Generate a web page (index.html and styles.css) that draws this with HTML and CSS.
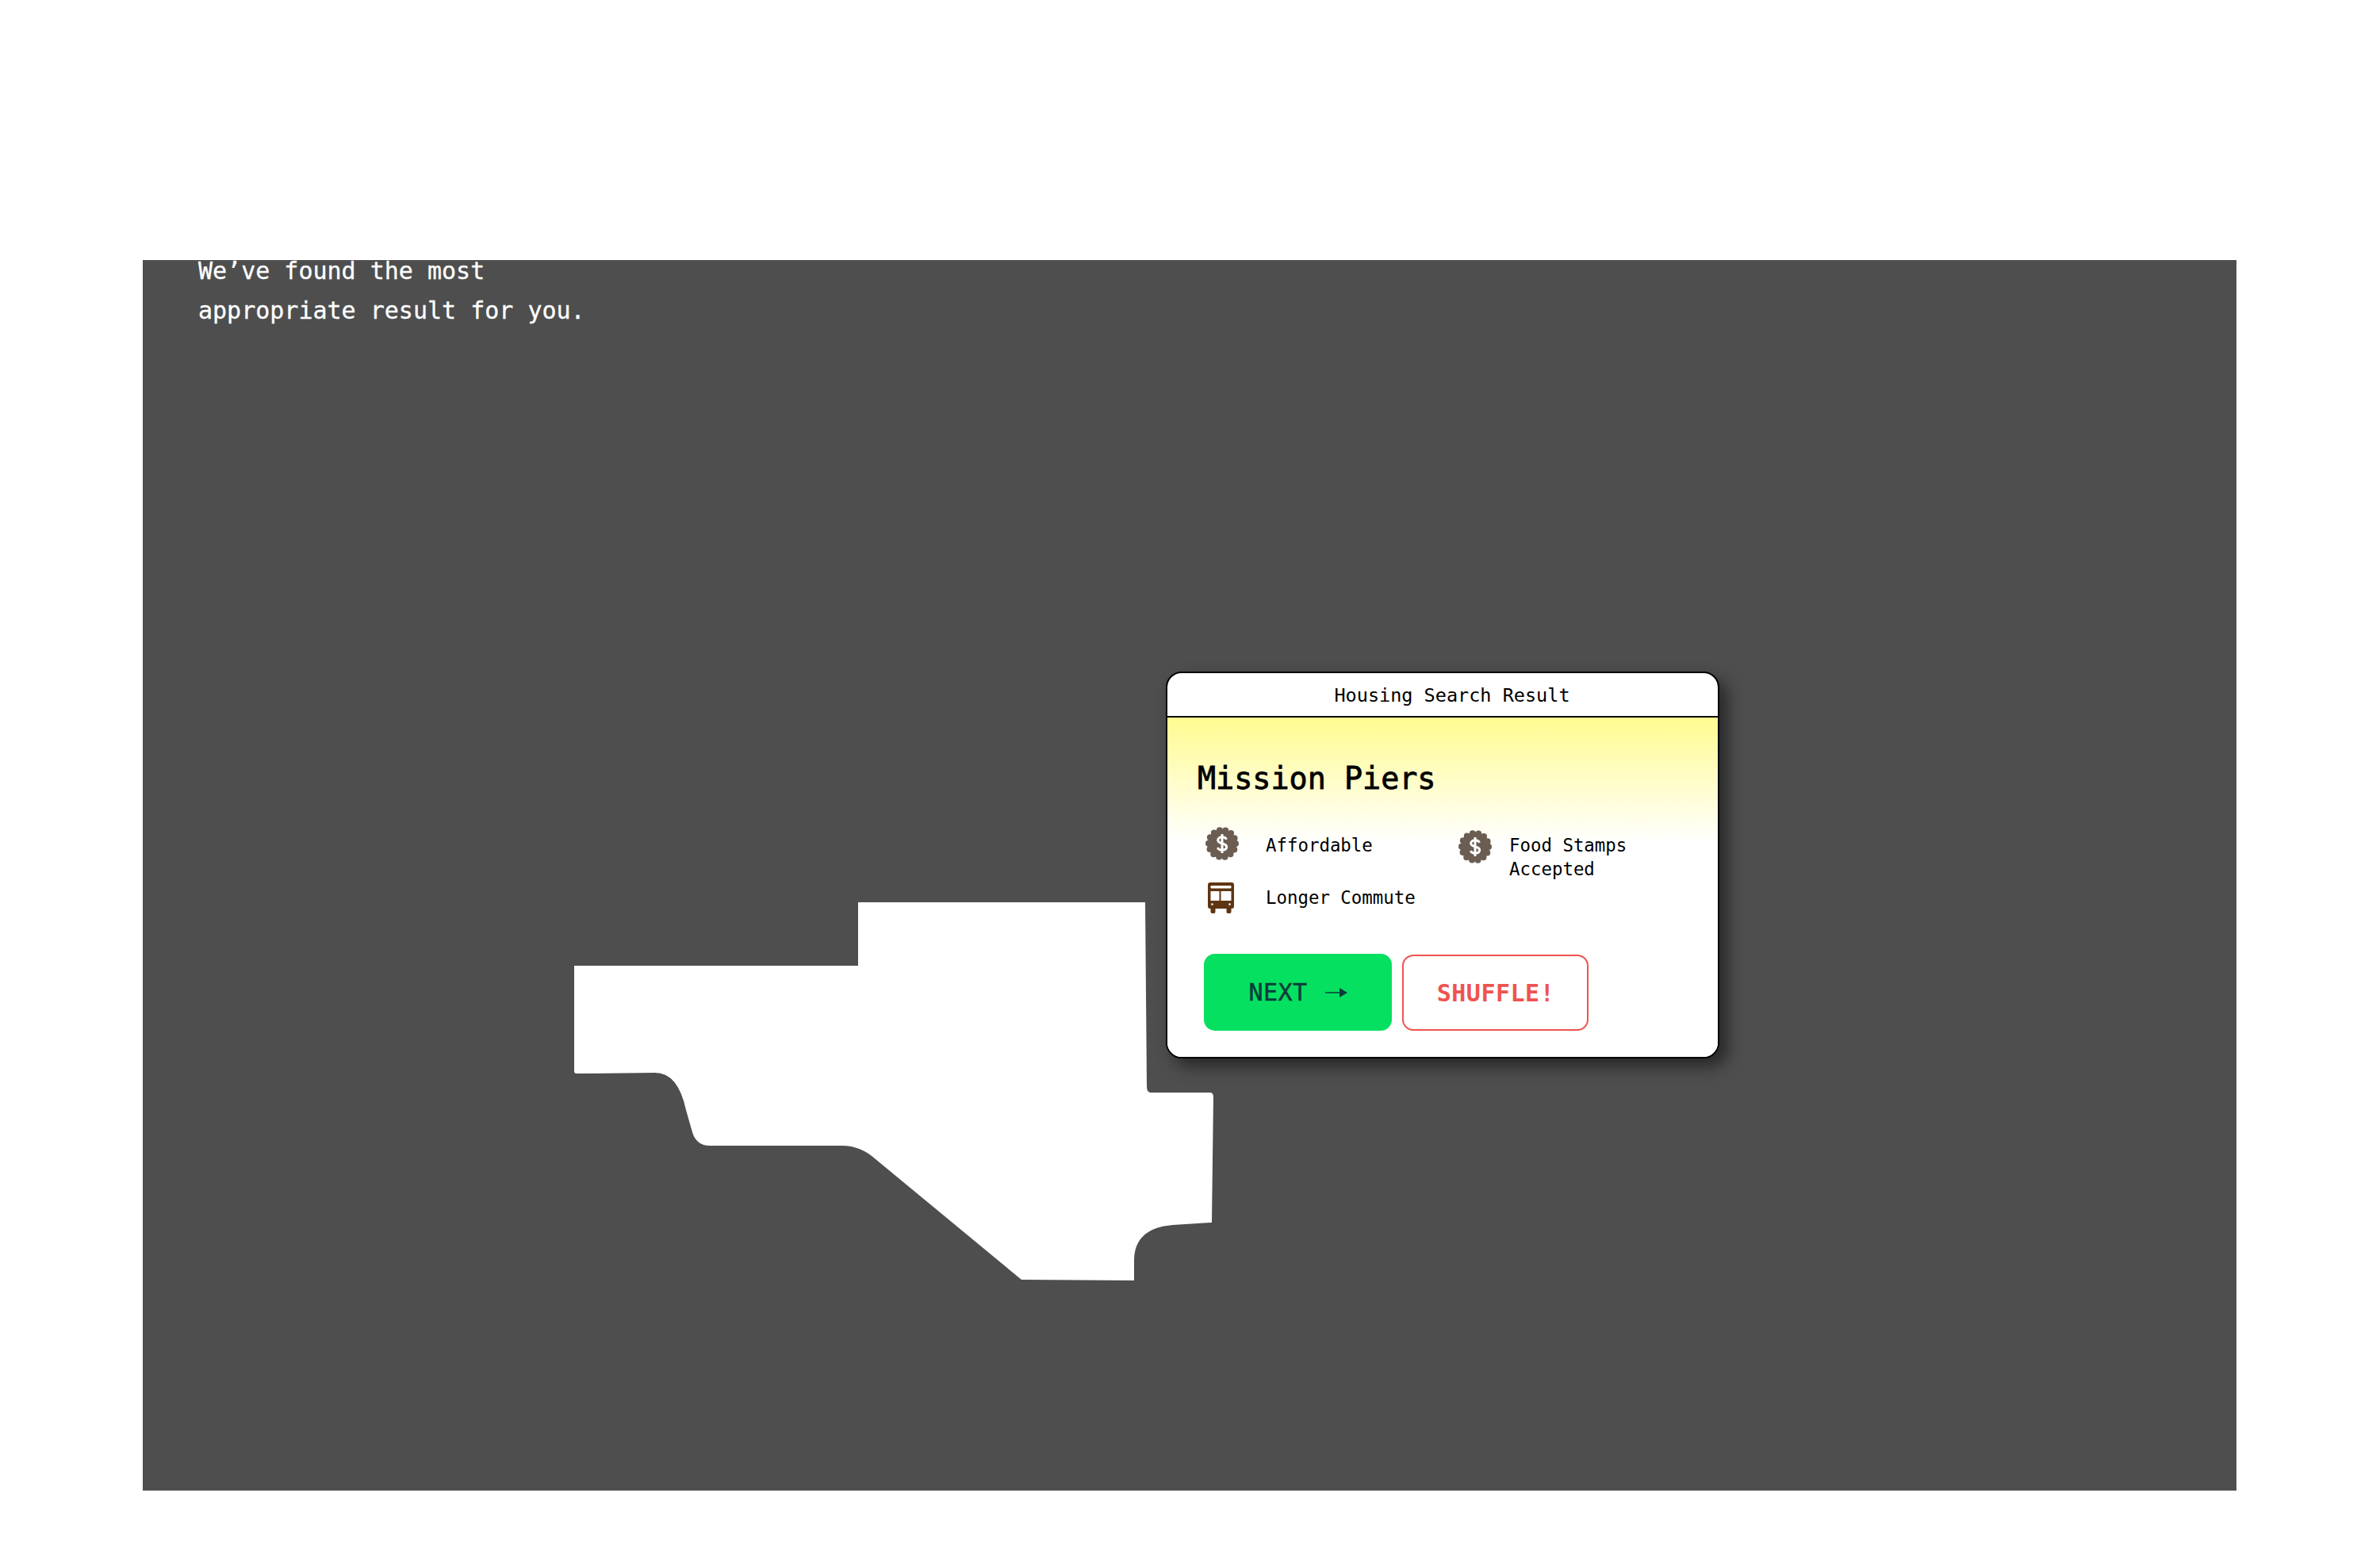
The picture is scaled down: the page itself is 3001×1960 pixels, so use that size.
FILE: index.html
```html
<!DOCTYPE html>
<html lang="en">
<head>
    <meta charset="UTF-8">
    <meta name="viewport" content="width=device-width, initial-scale=1.0">
    <title>Housing Search Result</title>
    <link rel="stylesheet" href="styles.css">
</head>
<body>
    <svg class="defs" width="0" height="0" aria-hidden="true">
        <symbol id="badge" viewBox="0 0 42 42">
            <circle cx="21" cy="21" r="17" fill="#6b5d52"/>
            <circle cx="21" cy="21" r="17" fill="none" stroke="#6b5d52" stroke-width="8" stroke-linecap="round" stroke-dasharray="0 7.63"/>
            <path d="M26.500 15.800c-.8-2-3-3-5.500-3-3 0-5.300 1.600-5.300 4 0 5.500 11 2.800 11 8.300 0 2.500-2.300 4.100-5.700 4.100-2.600 0-4.700-1.100-5.700-3.100M21 9v24" fill="none" stroke="#fff" stroke-width="3"/>
        </symbol>
    </svg>

    <main class="panel">
        <p class="intro">We’ve found the most<br>appropriate result for you.</p>

        <svg class="map-shape" viewBox="724 1138 806 477" aria-hidden="true">
            <path d="M1082 1138H1444L1446 1370Q1446 1378 1451 1378H1526Q1530 1378 1530 1384L1528 1542 1479 1545Q1430 1549 1430 1590V1615L1288 1614 1104 1462Q1085 1445 1062 1445H895Q878 1445 873 1428L865 1400Q855 1353 826 1353L727 1354Q724 1354 724 1351V1218H1082Z" fill="#fff"/>
        </svg>

        <section class="card">
            <header class="card-title">Housing Search Result</header>
            <div class="card-body">
                <h1 class="place-name">Mission Piers</h1>
                <div class="features">
                    <div class="feature">
                        <svg class="icon icon-badge"><use href="#badge"/></svg>
                        <span>Affordable</span>
                    </div>
                    <div class="feature feature-wide">
                        <svg class="icon icon-badge"><use href="#badge"/></svg>
                        <span>Food Stamps<br>Accepted</span>
                    </div>
                    <div class="feature">
                        <svg class="icon icon-bus" viewBox="0 0 33 39">
                            <rect x="3.500" y="30" width="6" height="9" rx="2" fill="#5e3512"/>
                            <rect x="23.500" y="30" width="6" height="9" rx="2" fill="#5e3512"/>
                            <rect width="33" height="33" rx="3" fill="#5e3512"/>
                            <rect x="3.500" y="4" width="26" height="3.500" rx="1" fill="#fff"/>
                            <rect x="3.500" y="11" width="11" height="12" fill="#fff"/>
                            <rect x="16.500" y="11" width="13" height="12" fill="#fff"/>
                            <circle cx="5.500" cy="27.500" r="1.300" fill="#fff"/>
                            <circle cx="27.500" cy="27.500" r="1.300" fill="#fff"/>
                        </svg>
                        <span>Longer Commute</span>
                    </div>
                </div>
                <div class="actions">
                    <button class="btn btn-next">NEXT
                        <svg class="arrow" viewBox="0 0 28 12"><path d="M0 5.200H18V0L28 6 18 12V6.800H0Z" fill="#0a3d3a"/></svg>
                    </button>
                    <button class="btn btn-shuffle">SHUFFLE!</button>
                </div>
            </div>
        </section>
    </main>
</body>
</html>
```

FILE: styles.css
```css
* {
    margin: 0;
    padding: 0;
    box-sizing: border-box;
    font-family: "DejaVu Sans Mono", "Liberation Mono", monospace;
}

body {
    background-color: #fff;
    padding: 328px 0 0 180px;
}

.defs {
    position: absolute;
}

.panel {
    position: relative;
    width: 2640px;
    height: 1552px;
    background-color: #4e4e4e;
    overflow: hidden;
}

.intro {
    margin-top: -11px;
    padding-left: 70px;
    color: #fff;
    font-size: 30px;
    line-height: 50px;
    -webkit-text-stroke: 0.3px #fff;
}

.map-shape {
    position: absolute;
    left: 544px;
    top: 810px;
    width: 806px;
    height: 477px;
}

.card {
    position: absolute;
    left: 1290px;
    top: 519px;
    width: 698px;
    height: 488px;
    background-color: #fff;
    border: 2px solid #000;
    border-radius: 20px;
    box-shadow: 10px 10px 20px rgba(0, 0, 0, 0.5);
    overflow: hidden;
}

.card-title {
    height: 56px;
    padding-left: 24px;
    border-bottom: 2px solid #000;
    color: #000;
    font-size: 23.500px;
    line-height: 56px;
    text-align: center;
}

.card-body {
    height: 430px;
    padding: 52px 0 0 38px;
    background: linear-gradient(#fffb90, #fff 158px);
}

.place-name {
    color: #000;
    font-size: 38.400px;
    font-weight: 400;
    line-height: 50px;
    -webkit-text-stroke: 0.8px #000;
}

.features {
    display: grid;
    grid-template-columns: 319px 1fr;
    row-gap: 6px;
    margin: 44px 0 0 10px;
    color: #000;
    font-size: 22.400px;
    line-height: 30px;
}

.feature {
    display: flex;
    align-items: flex-start;
}

.icon {
    flex: none;
}

.icon-badge {
    width: 42px;
    height: 42px;
    margin: -8px 34px 0 0;
}

.feature-wide .icon-badge {
    margin: -4px 22px 0 0;
}

.icon-bus {
    width: 33px;
    height: 39px;
    margin: -4px 40px 0 3px;
}

.actions {
    display: flex;
    align-items: flex-end;
    gap: 13px;
    margin: 51px 0 0 8px;
}

.btn {
    border-radius: 14px;
    font-size: 30px;
    letter-spacing: 0.5px;
}

.btn-next {
    display: flex;
    align-items: center;
    justify-content: center;
    gap: 22px;
    width: 237px;
    height: 97px;
    border: none;
    background-color: #06e061;
    color: #0a3d3a;
    -webkit-text-stroke: 0.5px #0a3d3a;
}

.arrow {
    width: 28px;
    height: 12px;
}

.btn-shuffle {
    width: 235px;
    height: 96px;
    padding-left: 1px;
    border: 2px solid #ef5350;
    background-color: #fff;
    color: #ef5350;
    font-weight: 700;
}
```
